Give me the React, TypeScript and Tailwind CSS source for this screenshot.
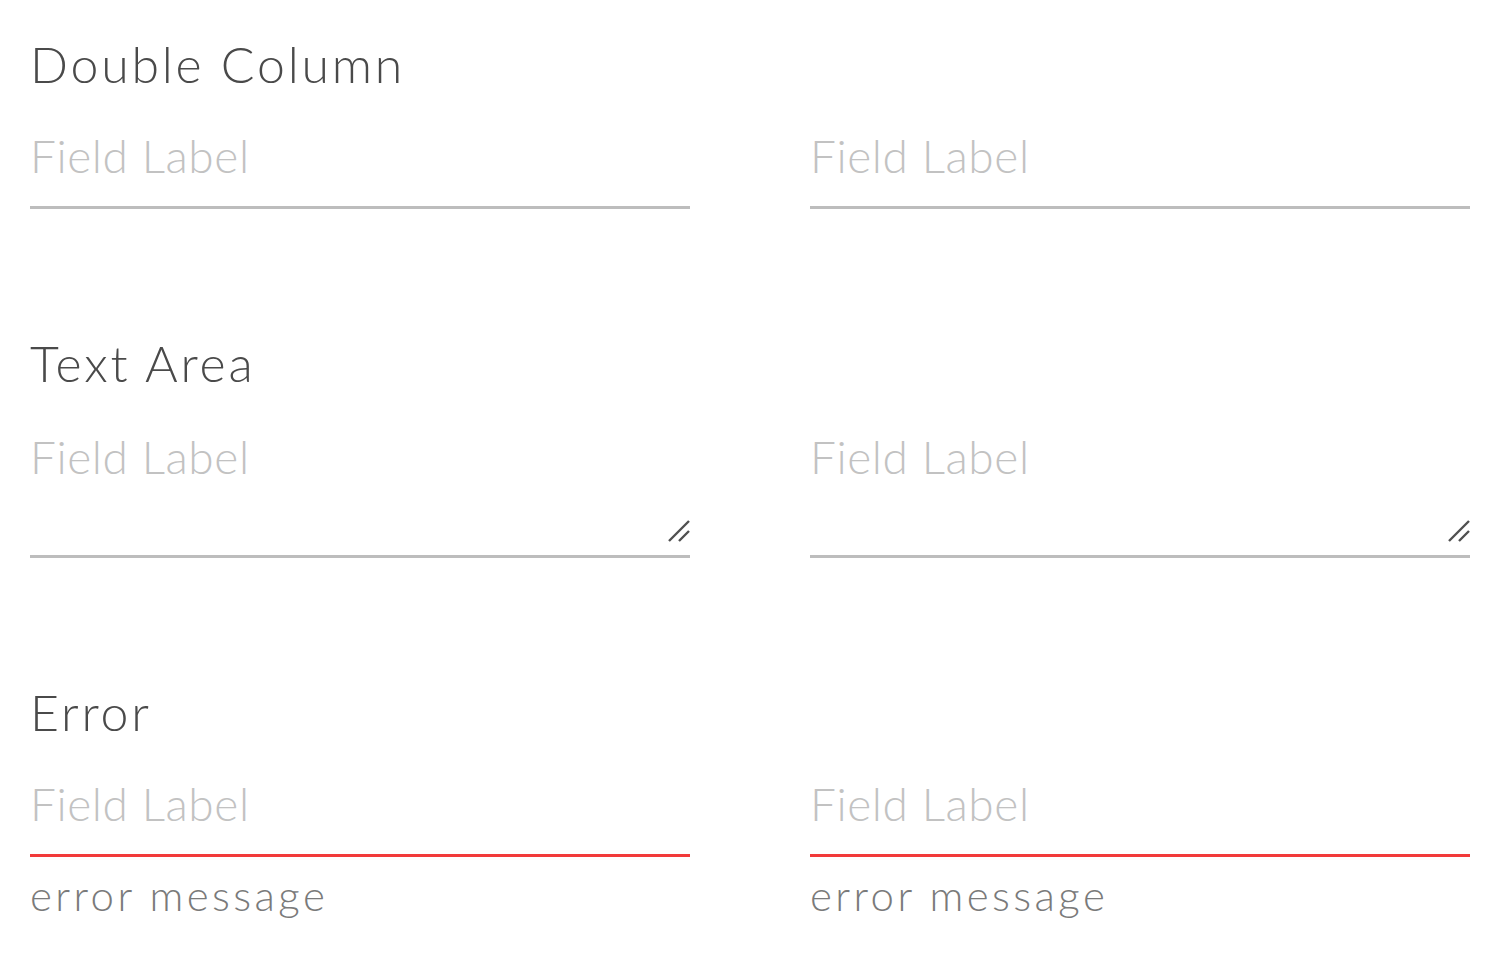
import React from 'react'

const font = { fontFamily: 'Lato, "Noto Sans", sans-serif' }

function Grip() {
  return (
    <svg className="absolute right-0 bottom-[16px] pointer-events-none" width="22" height="22" viewBox="0 0 22 22">
      <path d="M1 21 L21 1 M11 21 L21 11" stroke="#505050" strokeWidth="2.4" fill="none" />
    </svg>
  )
}

function Field({ area, error }: { area?: boolean; error?: boolean }) {
  const line = error ? 'border-[#f23a3a]' : 'border-[#bdbdbd]'
  return (
    <div className="relative flex flex-col">
      {area ? (
        <>
          <textarea
            placeholder="Field Label"
            className={`block w-full h-[141px] resize-none border-0 border-b-[3px] ${line} bg-transparent outline-none text-[46px] leading-[56px] pt-[12px] tracking-[0.6px] font-light text-[#4a4a4a] placeholder:text-[#c2c2c2]`}
          />
          <Grip />
        </>
      ) : (
        <input
          placeholder="Field Label"
          className={`block w-full h-[91px] pb-[14px] border-0 border-b-[3px] ${line} bg-transparent outline-none text-[46px] leading-[56px] tracking-[0.6px] font-light text-[#4a4a4a] placeholder:text-[#c2c2c2]`}
        />
      )}
      {error && <p className="text-[42px] leading-[52px] mt-[12px] tracking-[3.4px] font-light text-[#7a7a7a]">error message</p>}
    </div>
  )
}

export default function App() {
  return (
    <div className="w-[1500px] h-[963px] bg-white px-[30px] pt-[34px]" style={font}>
      <h2 className="text-[50px] leading-[60px] tracking-[2.8px] font-light text-[#4a4a4a] mb-[24px]">Double Column</h2>
      <div className="grid grid-cols-2 gap-x-[120px]">
        <Field />
        <Field />
      </div>

      <h2 className="text-[50px] leading-[60px] tracking-[2.8px] font-light text-[#4a4a4a] mt-[124px] mb-[24px]">Text Area</h2>
      <div className="grid grid-cols-2 gap-x-[120px]">
        <Field area />
        <Field area />
      </div>

      <h2 className="text-[50px] leading-[60px] tracking-[2.8px] font-light text-[#4a4a4a] mt-[124px] mb-[24px]">Error</h2>
      <div className="grid grid-cols-2 gap-x-[120px]">
        <Field error />
        <Field error />
      </div>
    </div>
  )
}
